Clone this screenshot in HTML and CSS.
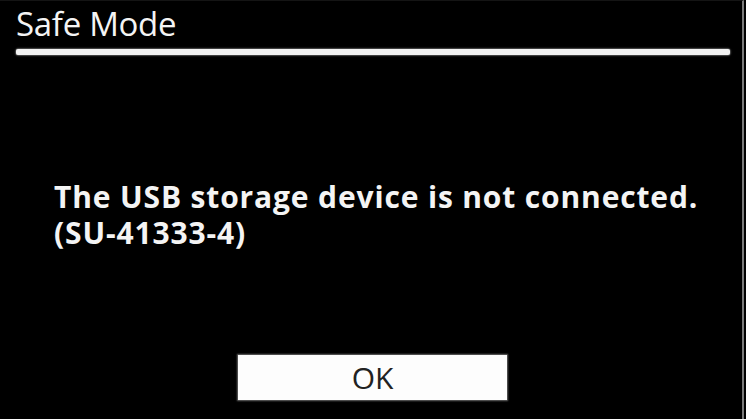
FILE: index.html
```html
<!DOCTYPE html>
<html>
<head>
<meta charset="utf-8">
<link rel="stylesheet" href="styles.css">
</head>
<body>
<div class="screen">
  <header class="header">
    <h1 class="title">Safe Mode</h1>
    <div class="rule"></div>
  </header>
  <main class="message">
    <p class="text">The USB storage device is not connected.<br>(SU-41333-4)</p>
  </main>
  <div class="actions">
    <button class="ok">OK</button>
  </div>
</div>
</body>
</html>
```

FILE: styles.css
```css
html, body {
  margin: 0;
  padding: 0;
  background: #000;
  width: 746px;
  height: 419px;
  overflow: hidden;
}
.screen {
  box-sizing: border-box;
  width: 744px;
  height: 419px;
  border-right: 2px solid #7a7a7a;
  border-top: 1px solid #141414;
  display: flex;
  flex-direction: column;
  font-family: "Open Sans", "DejaVu Sans", sans-serif;
  color: #f4f4f4;
}
.header {
  padding: 0 0 0 16px;
  width: 714px;
}
.title {
  margin: 0;
  font-weight: 400;
  font-size: 33px;
  line-height: 40px;
  height: 40px;
  padding-top: 3px;
  letter-spacing: -0.3px;
}
.rule {
  margin-top: 5px;
  height: 6px;
  background: #f2f2f2;
  border-radius: 2px;
  box-shadow: 0 0 1.5px 0.5px rgba(160,160,160,0.8);
}
.message {
  padding: 124px 0 0 54px;
}
.text {
  margin: 0;
  font-weight: 700;
  font-size: 30px;
  line-height: 36px;
  letter-spacing: 0.85px;
}
.actions {
  padding: 104px 0 0 238px;
}
.ok {
  display: flex;
  align-items: center;
  justify-content: center;
  width: 269px;
  height: 45px;
  padding: 0;
  margin: 0;
  border: none;
  background: #fdfdfd;
  box-shadow: 0 0 1.5px 1px rgba(150,150,150,0.7);
  font-family: "Open Sans", "DejaVu Sans", sans-serif;
  font-size: 30px;
  font-weight: 400;
  color: #222;
  line-height: 45px;
}
```
